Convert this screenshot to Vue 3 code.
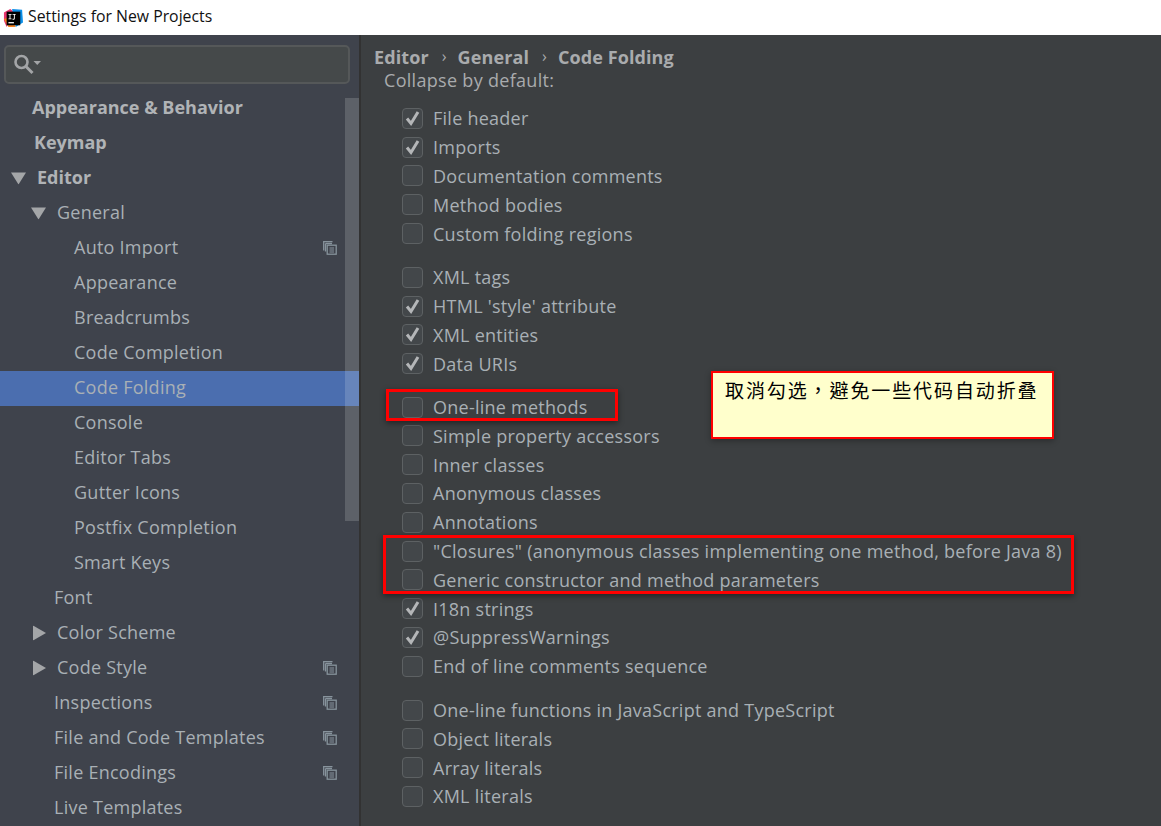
<script setup>
const nav = [
  { t: 'Appearance & Behavior', pad: 32, bold: true },
  { t: 'Keymap', pad: 34, bold: true },
  { t: 'Editor', pad: 37, bold: true, arrow: 'down', ax: 11 },
  { t: 'General', pad: 57, arrow: 'down', ax: 31 },
  { t: 'Auto Import', pad: 74, copy: true },
  { t: 'Appearance', pad: 74 },
  { t: 'Breadcrumbs', pad: 74 },
  { t: 'Code Completion', pad: 74 },
  { t: 'Code Folding', pad: 74, active: true },
  { t: 'Console', pad: 74 },
  { t: 'Editor Tabs', pad: 74 },
  { t: 'Gutter Icons', pad: 74 },
  { t: 'Postfix Completion', pad: 74 },
  { t: 'Smart Keys', pad: 74 },
  { t: 'Font', pad: 54 },
  { t: 'Color Scheme', pad: 57, arrow: 'right', ax: 33 },
  { t: 'Code Style', pad: 57, arrow: 'right', ax: 33, copy: true },
  { t: 'Inspections', pad: 54, copy: true },
  { t: 'File and Code Templates', pad: 54, copy: true },
  { t: 'File Encodings', pad: 54, copy: true },
  { t: 'Live Templates', pad: 54 }
]
const groups = [
  [['File header', 1], ['Imports', 1], ['Documentation comments', 0], ['Method bodies', 0], ['Custom folding regions', 0]],
  [['XML tags', 0], ["HTML 'style' attribute", 1], ['XML entities', 1], ['Data URIs', 1]],
  [['One-line methods', 0], ['Simple property accessors', 0], ['Inner classes', 0], ['Anonymous classes', 0], ['Annotations', 0],
   ['"Closures" (anonymous classes implementing one method, before Java 8)', 0], ['Generic constructor and method parameters', 0],
   ['I18n strings', 1], ['@SuppressWarnings', 1], ['End of line comments sequence', 0]],
  [['One-line functions in JavaScript and TypeScript', 0], ['Object literals', 0], ['Array literals', 0], ['XML literals', 0]]
]
</script>

<template>
  <div class="window">
    <header class="titlebar">
      <svg class="logo" width="20" height="20" viewBox="0 0 22 22">
        <path d="M1 5 L8 1 L12 4 L4 21 L1 14 Z" fill="#e8366f" />
        <path d="M10 1 L21 2 L22 16 L14 21 Z" fill="#0b8fe8" />
        <path d="M1 12 L6 21 L14 21 L8 10 Z" fill="#f6821f" />
        <rect x="4" y="4" width="15" height="15" fill="#000" />
        <rect x="6" y="15.500" width="6" height="1.400" fill="#fff" />
        <path d="M6 6.500h3.400v1H8.200v4h1.200v1H6v-1h1.200v-4H6zM10.500 6.500h3.500v1h-1v4c0 1-.7 1.400-1.500 1.400h-1v-1h.8c.4 0 .7-.2.7-.6V7.500h-1.500z" fill="#fff" />
      </svg>
      <span class="title">Settings for New Projects</span>
    </header>
    <div class="body">
      <aside class="sidebar">
        <div class="search">
          <svg width="28" height="22" viewBox="0 0 28 22">
            <circle cx="7.500" cy="8" r="6" fill="none" stroke="#a3a5a7" stroke-width="2.600" />
            <path d="M11.500 12 L18.500 19" stroke="#a3a5a7" stroke-width="3" />
            <path d="M19.500 7 H27 L23.250 11 Z" fill="#a3a5a7" />
          </svg>
        </div>
        <nav class="tree">
          <div v-for="n in nav" :key="n.t" class="node" :class="{ active: n.active, bold: n.bold }" :style="{ paddingLeft: n.pad + 'px' }">
            <svg v-if="n.arrow === 'down'" class="arrow" :style="{ left: n.ax + 'px' }" width="15" height="13" viewBox="0 0 15 13"><path d="M0 1 H15 L7.500 13 Z" fill="#a4a6a8" /></svg>
            <svg v-if="n.arrow === 'right'" class="arrow" :style="{ left: n.ax + 'px' }" width="13" height="15" viewBox="0 0 13 15"><path d="M0 0 L13 7.500 L0 15 Z" fill="#a4a6a8" /></svg>
            <span>{{ n.t }}</span>
            <svg v-if="n.copy" class="copy" width="14" height="14" viewBox="0 0 14 14" fill="none" stroke="#87939c" stroke-width="1.300">
              <path d="M9.500 .7 H.7 V9.500" />
              <path d="M2.500 2.500 H9 M2.500 2.500 V10.500" />
              <rect x="4.200" y="4.200" width="9" height="9" />
              <path d="M6.500 7 H11 M6.500 9 H11 M6.500 11 H11" stroke-width="1" />
            </svg>
          </div>
        </nav>
        <div class="scrollbar"></div>
      </aside>
      <main class="content">
        <div class="crumbs">
          <span>Editor</span><i>›</i><span>General</span><i>›</i><span>Code Folding</span>
        </div>
        <div class="caption">Collapse by default:</div>
        <section v-for="(g, i) in groups" :key="i" class="group">
          <label v-for="r in g" :key="r[0]" class="row">
            <span class="box">
              <svg v-if="r[1]" width="19" height="19" viewBox="0 0 19 19"><path d="M4 9.500 L8 14.500 L15 3" fill="none" stroke="#b4b6b8" stroke-width="3" /></svg>
            </span>
            <span>{{ r[0] }}</span>
          </label>
        </section>
        <div class="mark m1"></div>
        <div class="mark m2"></div>
        <div class="note">取消勾选，避免一些代码自动折叠</div>
      </main>
    </div>
  </div>
</template>

<style>
html, body { margin: 0; background: #3c3f41; }
</style>

<style scoped>
.window { width: 1161px; height: 826px; overflow: hidden; display: flex; flex-direction: column; font-family: "Open Sans", "Noto Sans", sans-serif; }
.titlebar { height: 35px; flex: none; background: #fff; display: flex; align-items: center; gap: 5px; padding-left: 3px; box-sizing: border-box; }
.logo { flex: none; }
.title { font-size: 15.800px; line-height: 33px; margin-bottom: 2px; color: #111; }
.body { flex: 1; display: flex; min-height: 0; }
.sidebar { flex: none; background: #3f434c; border-right: 2px solid #323232; box-sizing: border-box; position: relative; width: 361px; }
.search { margin: 10px 0 0 4px; width: 346px; height: 39px; box-sizing: border-box; background: #45494a; border: 2px solid #555859; border-radius: 5px; display: flex; align-items: center; padding-left: 8px; }
.tree { margin-top: 7px; }
.node { height: 35px; display: flex; align-items: center; padding-bottom: 4px; font-size: 18px; color: #a9b0b5; position: relative; box-sizing: border-box; letter-spacing: .25px; }
.node.bold { font-weight: 700; color: #b0b3b6; letter-spacing: 0; }
.node.active { background: #4b6eaf; }
.arrow { position: absolute; top: calc(50% - 1px); transform: translateY(-50%); }
.copy { position: absolute; left: 323px; top: 10px; }
.scrollbar { position: absolute; left: 345px; top: 63px; width: 14px; height: 423px; background: rgba(255, 255, 255, .16); }
.content { flex: 1; background: #3c3f41; position: relative; padding-left: 24px; min-width: 0; }
.crumbs { height: 38px; position: relative; z-index: 1; background: #3c3f41; display: flex; align-items: flex-start; padding-top: 9px; box-sizing: border-box; font-size: 18px; line-height: 26px; font-weight: 700; letter-spacing: .1px; color: #a9abad; margin-left: -11px; }
.crumbs i { font-style: normal; font-weight: 400; margin: -1px 11px 0 13px; font-size: 16px; }
.caption { font-size: 18px; line-height: 28px; height: 28px; margin-top: -7px; color: #a9abad; letter-spacing: .3px; margin-left: -1px; }
.group { margin-top: 15px; }
.group:first-of-type { margin-top: 10px; }
.group:nth-of-type(3) { margin-top: 14.500px; }
.row { height: 28.800px; display: flex; align-items: center; gap: 10px; font-size: 18px; color: #a9b0b5; margin-left: 17px; letter-spacing: .25px; white-space: nowrap; }
.box { width: 21px; height: 21px; flex: none; box-sizing: border-box; border: 1.500px solid #5d6163; border-radius: 4px; background: #43474a; display: flex; align-items: center; justify-content: center; }
.mark { position: absolute; border: 3px solid #f00; box-shadow: 0 2px 6px rgba(0, 0, 0, .45); box-sizing: border-box; pointer-events: none; }
.m1 { left: 25px; top: 354px; width: 232px; height: 32px; }
.m2 { left: 22px; top: 500px; width: 691px; height: 59px; }
.note { position: absolute; left: 350px; top: 336px; width: 343px; height: 68px; box-sizing: border-box; background: #ffc; border: 2px solid #f00; box-shadow: 0 2px 6px rgba(0, 0, 0, .3); font-family: "Noto Sans CJK TC", sans-serif; font-size: 19px; line-height: 26px; letter-spacing: 1.900px; color: #000; padding: 4px 0 0 12px; white-space: nowrap; }
</style>
